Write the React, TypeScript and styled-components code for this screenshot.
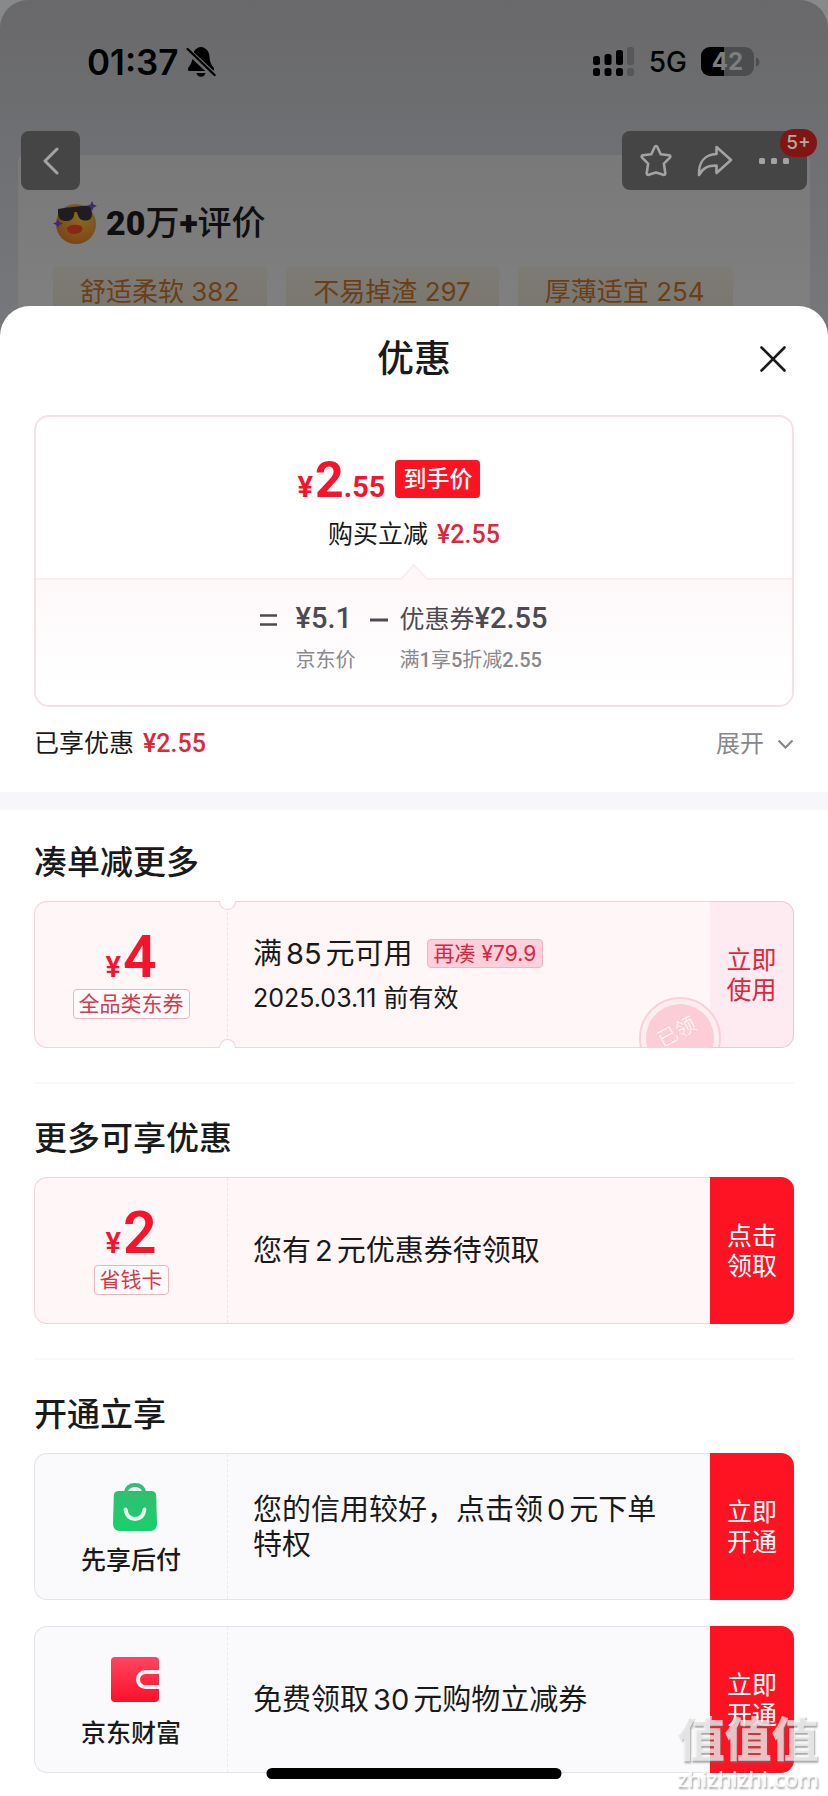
import React from "react";
import styled, { createGlobalStyle, css } from "styled-components";

const GlobalStyle = createGlobalStyle`
  * { box-sizing: border-box; }
  body {
    margin: 0;
    background: #ffffff;
    color: #1a1a1a;
    font-family: Inter, "Noto Sans CJK SC", sans-serif;
  }
  button { font: inherit; padding: 0; border: 0; background: none; cursor: pointer; }
  h1, h2, p { margin: 0; }
`;

const numeric = css`
  font-family: Roboto, "Noto Sans CJK SC", sans-serif;
`;

const Page = styled.div`
  min-height: 100vh;
  background: #88898a;
`;

/* ---------- dimmed product page ---------- */

const Backdrop = styled.div`
  height: 338px;
  overflow: hidden;
  border-radius: 28px 28px 0 0;
  background: linear-gradient(#69696b 0, #6f7073 155px, #76787c 338px);
`;

const StatusBar = styled.div`
  display: flex;
  justify-content: space-between;
  align-items: center;
  height: 131px;
  padding: 0 68px 7px 87px;
  color: #000;
`;

const StatusGroup = styled.div<{ $gap: number }>`
  display: flex;
  align-items: center;
  gap: ${(p) => p.$gap}px;
`;

const Clock = styled.span`
  font-size: 35px;
  font-weight: 600;
  line-height: 40px;
`;

const Network = styled.span`
  font-size: 28px;
  font-weight: 500;
  line-height: 32px;
`;

const NavBar = styled.div`
  position: relative;
  z-index: 1;
  display: flex;
  justify-content: space-between;
  padding: 0 21px;
`;

const NavGroup = styled.div<{ $inset?: number }>`
  position: relative;
  display: flex;
  padding: 0 ${(p) => p.$inset ?? 0}px;
  border-radius: 8px;
  background: #454546;
`;

const NavButton = styled.button`
  display: grid;
  place-items: center;
  width: 59px;
  height: 59px;
`;

const NavBadge = styled.span`
  position: absolute;
  top: -2px;
  right: -10px;
  width: 37px;
  border-radius: 14px;
  background: #7f1614;
  color: #b9a6a5;
  font-size: 19px;
  font-weight: 500;
  line-height: 28px;
  text-align: center;
`;

const ReviewCard = styled.div`
  height: 200px;
  margin: -35px 18px 0;
  padding: 46px 35px 0;
  border-radius: 6px;
  background: linear-gradient(#797979, #818181);
`;

const ReviewTitle = styled.div`
  display: flex;
  align-items: center;
  gap: 9px;
  ${numeric}
  font-size: 34px;
  font-weight: 500;
  line-height: 44px;
  color: #0f0f10;

  b { font-weight: 900; }
`;

const TagRow = styled.div`
  display: flex;
  gap: 19px;
  margin-top: 21px;
`;

const ReviewTag = styled.span`
  padding: 9px 28px 0 27px;
  border-radius: 4px;
  background: linear-gradient(#7d7b75, #79766e);
  color: #6a3f17;
  font-size: 26px;
  line-height: 34px;
  height: 52px;
  white-space: nowrap;
`;

/* ---------- sheet ---------- */

const Sheet = styled.section`
  position: relative;
  z-index: 2;
  margin-top: -32px;
  padding-bottom: 23px;
  border-radius: 30px 30px 0 0;
  background: #fff;
`;

const SheetHeader = styled.header`
  display: grid;
  grid-template-columns: 1fr auto 1fr;
  align-items: center;
  height: 109px;
  padding: 0 35px 4px;
`;

const SheetTitle = styled.h1`
  grid-column: 2;
  font-size: 37px;
  font-weight: 500;
  line-height: 44px;
`;

const CloseButton = styled.button`
  display: grid;
  place-items: center;
  justify-self: end;
  width: 40px;
  height: 40px;
`;

const PriceCard = styled.div`
  margin: 0 34px;
  border: 2px solid #f7dfe4;
  border-radius: 15px;
`;

const PriceTop = styled.div`
  display: flex;
  flex-direction: column;
  align-items: center;
  gap: 21px;
  padding: 43px 0 28px;
`;

const FinalPrice = styled.div`
  display: flex;
  align-items: flex-end;
  gap: 10px;
  padding-right: 50px;
`;

const Amount = styled.span<{ $size: number; $height: number; $weight: number }>`
  ${numeric}
  color: #f5142b;
  font-size: ${(p) => p.$size}px;
  font-weight: ${(p) => p.$weight};
  line-height: ${(p) => p.$height}px;

  small { font-size: 29px; line-height: 0; }
  small:first-child { margin-right: 2px; }
`;

const PriceTag = styled.span`
  padding: 0 8px;
  border-radius: 4px;
  background: #fd1322;
  color: #fff;
  font-size: 23px;
  font-weight: 500;
  line-height: 38px;
`;

const SavingText = styled.p`
  font-size: 25px;
  line-height: 30px;
`;

const SavingValue = styled.span`
  ${numeric}
  margin-left: 9px;
  color: #e0263a;
  font-weight: 500;
`;

const Formula = styled.div`
  position: relative;
  display: grid;
  grid-template-columns: 37px 74px 30px auto;
  justify-content: center;
  row-gap: 11px;
  padding: 24px 22px 32px 0;
  border-top: 2px solid #faeef1;
  border-radius: 0 0 13px 13px;
  background: linear-gradient(#fef8f9, #ffffff 90%);
  color: #4b4b50;
`;

const FormulaArrow = styled.svg`
  position: absolute;
  top: -17px;
  left: 50%;
  margin-left: -14px;
`;

const Operator = styled.span`
  display: flex;
  align-items: center;
  height: 32px;
`;

const Term = styled.span`
  ${numeric}
  font-size: 25px;
  line-height: 32px;
  white-space: nowrap;

  b { font-size: 29px; font-weight: 500; line-height: 0; }
  b:not(:first-child) { margin-left: 4px; }
`;

const TermNote = styled.span<{ $column: number }>`
  ${numeric}
  grid-column: ${(p) => p.$column};
  color: #88888d;
  font-size: 20px;
  line-height: 26px;
  white-space: nowrap;

  b { font-weight: 500; }
`;

const SummaryRow = styled.div`
  display: flex;
  justify-content: space-between;
  align-items: center;
  padding: 21px 34px 33px;
`;

const ExpandButton = styled.button`
  display: flex;
  align-items: center;
  gap: 13px;
  color: #88888c;
  font-size: 24px;
  line-height: 30px;
`;

const Band = styled.div`
  height: 18px;
  background: #f6f6fb;
`;

const Section = styled.section`
  margin: 0 34px;
  padding: 32px 0 34px;

  & + & {
    padding-top: 34px;
    border-top: 2px solid #f9f9fa;
  }
  &:last-of-type { padding-bottom: 0; }
`;

const SectionTitle = styled.h2`
  margin-bottom: 19px;
  font-size: 33px;
  font-weight: 500;
  line-height: 40px;
`;

const Stack = styled.div`
  display: flex;
  flex-direction: column;
  gap: 26px;
`;

type Tone = "pink" | "grey";
const tones = {
  pink: { line: "#f3d3da", dash: "#f8e1e5", fill: "#fef6f7" },
  grey: { line: "#e2e4e8", dash: "#e9ebef", fill: "#fafafc" },
};

const Ticket = styled.article`
  position: relative;
  display: flex;
  min-height: 147px;
`;

const TicketBody = styled.div<{ $tone: Tone }>`
  flex: 1;
  display: flex;
  border: 1px solid ${(p) => tones[p.$tone].line};
  border-right: 0;
  border-radius: 13px 0 0 13px;
  background: ${(p) => tones[p.$tone].fill};
`;

const TicketSide = styled.div<{ $tone: Tone }>`
  display: flex;
  flex-direction: column;
  align-items: center;
  width: 193px;
  padding-top: ${(p) => (p.$tone === "pink" ? 34 : 29)}px;
  border-right: 1px dashed ${(p) => tones[p.$tone].dash};
`;

const KindTag = styled.span`
  margin-top: 11px;
  padding: 0 5px;
  border: 1px solid #efb4be;
  border-radius: 4px;
  background: #fffafb;
  color: #d8384a;
  font-size: 21px;
  line-height: 28px;
`;

const ServiceName = styled.span`
  margin-top: 13px;
  font-size: 25px;
  font-weight: 500;
  line-height: 32px;
`;

const TicketInfo = styled.div`
  flex: 1;
  display: flex;
  flex-direction: column;
  justify-content: center;
  gap: 12px;
  padding: 0 40px 0 25px;
`;

const InfoLine = styled.p`
  display: flex;
  align-items: center;
  gap: 14px;
  font-size: 29px;
  line-height: 35px;
`;

const Digits = styled.span`
  margin: 0 4px;
`;

const InfoDate = styled.p`
  font-size: 25px;
  line-height: 30px;
`;

const GapTag = styled.span`
  padding: 0 6px;
  border: 1px solid #f6b3c2;
  border-radius: 4px;
  background: #fdd0db;
  color: #d32a3f;
  font-size: 21px;
  line-height: 27px;
`;

const ActionButton = styled.button<{ $ghost?: boolean }>`
  width: 84px;
  border-radius: 0 13px 13px 0;
  background: #fd1322;
  color: #fff;
  font-size: 25px;
  line-height: 30px;

  ${(p) =>
    p.$ghost &&
    css`
      border: 1px solid #f5c6d2;
      border-left: 0;
      background: #feeaf1;
      color: #e0263a;
    `}
`;

const Notch = styled.span<{ $edge: "top" | "bottom" }>`
  position: absolute;
  left: 185px;
  width: 17px;
  height: 9px;
  border: 1px solid #f3d3da;
  background: #fff;
  ${(p) =>
    p.$edge === "top"
      ? css`
          top: 0;
          border-top: 0;
          border-radius: 0 0 9px 9px;
        `
      : css`
          bottom: 0;
          border-bottom: 0;
          border-radius: 9px 9px 0 0;
        `}
`;

const StampWindow = styled.span`
  position: absolute;
  right: 73px;
  bottom: 1px;
  width: 82px;
  height: 50px;
  overflow: hidden;
`;

const Stamp = styled.span`
  display: block;
  width: 82px;
  height: 82px;
  padding: 5px;
  border: 2px solid #f9d0d9;
  border-radius: 50%;
  background: #feeef2;
`;

const StampFace = styled.span`
  display: block;
  height: 100%;
  border-radius: 50%;
  background: #fdcdd7;
  color: #fff;
  font-size: 20px;
  font-weight: 300;
  line-height: 54px;
  text-align: center;
  transform: rotate(-28deg);
`;

const HomeIndicator = styled.div`
  position: fixed;
  z-index: 3;
  bottom: 17px;
  left: 50%;
  width: 295px;
  height: 11px;
  border-radius: 6px;
  background: #000;
  transform: translateX(-50%);
`;

const Watermark = styled.div`
  position: fixed;
  z-index: 4;
  right: 9px;
  bottom: 5px;
  color: rgba(255, 255, 255, 0.68);
  text-align: center;
  text-shadow: 1px 2px 2px rgba(110, 110, 110, 0.6);
  font-size: 47px;
  font-weight: 900;
  line-height: 52px;

  small {
    display: block;
    font-family: "Noto Sans", "Open Sans", sans-serif;
    font-size: 22px;
    font-weight: 500;
    line-height: 26px;
    color: rgba(255, 255, 255, 0.85);
  }
`;

/* ---------- drawings ---------- */

const BellOff = () => (
  <svg width="30" height="32" viewBox="0 0 30 32">
    <path d="M15 1c-5.200 .6-8.200 4.400-8.500 9.500C6.200 17 4.500 18.600 2.600 21.200c-1.400 2-.6 3.800 1.600 3.800h21.600c2.200 0 3-1.800 1.600-3.800-1.900-2.600-3.600-4.200-3.900-10.700C23.200 5.400 20.200 1.600 15 1z" fill="#000" />
    <path d="M10.500 27h9a4.600 4.600 0 0 1-9 0z" fill="#000" />
    <path d="M.8 3.600 28.800 30" stroke="#6b6c6e" strokeWidth="6" />
    <path d="M1.600 3 28.600 29" stroke="#000" strokeWidth="2.400" strokeLinecap="round" />
  </svg>
);

const Signal = () => (
  <svg width="42" height="30" viewBox="0 0 42 30">
    <g fill="#000">
      <rect x="0" y="9" width="7" height="9" rx="2.500" />
      <rect x="11.500" y="7" width="7" height="11" rx="2.500" />
      <rect x="23" y="3" width="7" height="15" rx="2.500" />
      <rect x="0" y="21" width="7" height="8" rx="2.500" />
      <rect x="11.500" y="21" width="7" height="8" rx="2.500" />
      <rect x="23" y="21" width="7" height="8" rx="2.500" />
    </g>
    <g fill="#565759">
      <rect x="34" y="0" width="7" height="18" rx="2.500" />
      <rect x="34" y="21" width="7" height="8" rx="2.500" />
    </g>
  </svg>
);

const Battery = () => (
  <svg width="59" height="30" viewBox="0 0 59 30">
    <defs>
      <clipPath id="charge"><rect width="23" height="30" /></clipPath>
    </defs>
    <rect x="0" y="0" width="53" height="29" rx="9" fill="#4c4d4f" />
    <rect x="0" y="0" width="53" height="29" rx="9" fill="#000" clipPath="url(#charge)" />
    <path d="M55 10.500c2.600 1 3.400 2.400 3.400 4.500s-.8 3.500-3.400 4.500z" fill="#4c4d4f" />
    <text x="26.500" y="23" textAnchor="middle" fontFamily="Inter, sans-serif" fontSize="24" fontWeight="700" fill="#7d7e80">42</text>
  </svg>
);

const SunglassesFace = () => (
  <svg width="44" height="44" viewBox="0 0 44 44">
    <defs>
      <radialGradient id="face" cx="60%" cy="35%" r="70%">
        <stop offset="0" stopColor="#8a6a22" />
        <stop offset="1" stopColor="#7a4316" />
      </radialGradient>
    </defs>
    <circle cx="23" cy="23" r="20" fill="url(#face)" />
    <path d="M5 8c11-2 22-3 33-3.500l1 8.500c0 4.500-2.500 6.500-6.500 6.500-5 0-7-2-8.500-8.500h-2.500c-.5 6.500-3 9-8 9-5.500 0-8-2-8.500-7z" fill="#201d22" />
    <path d="M14 27c2-4 12-4.500 15-1 2 3-2 7-7.500 7-4.500 0-7.500-2-7.500-6z" fill="#862814" />
    <path d="M39 0l1.500 3.500L44 5l-3.500 1.500L39 10l-1.500-3.500L34 5l3.500-1.500zM5 18l1.500 3L10 22.500 6.500 24 5 27l-1.500-3L0 22.500 3.500 21z" fill="#3b2b70" />
  </svg>
);

const ShoppingBag = () => (
  <svg width="56" height="48" viewBox="0 0 56 48">
    <defs>
      <linearGradient id="bag" x1="0" y1="0" x2="0" y2="1">
        <stop offset="0" stopColor="#31bf71" />
        <stop offset="1" stopColor="#18d06c" />
      </linearGradient>
    </defs>
    <path d="M22.500 10C23.500 4.500 27 2 32 2s8.500 2.500 9.500 8" fill="none" stroke="#31bf71" strokeWidth="4" />
    <path d="M16 8h32c3.500 0 5 1.500 5.200 4.500L54 40c.2 5-2.500 8-7.500 8h-29c-5 0-7.700-3-7.500-8l.8-27.500C11 9.500 12.500 8 16 8z" fill="url(#bag)" />
    <path d="M25.500 8c1.500-2 3.500-3 6.500-3s5 1 6.500 3z" fill="#e9f8f0" />
    <path d="M22.500 26.500c1 6 4.500 9.500 9.500 9.500s8.500-3.500 9.500-9.500" fill="none" stroke="#eafaf1" strokeWidth="4" strokeLinecap="round" />
  </svg>
);

const Wallet = () => (
  <svg width="56" height="48" viewBox="0 0 56 48">
    <defs>
      <linearGradient id="wallet" x1="0" y1="0" x2="0" y2="1">
        <stop offset="0" stopColor="#ff4560" />
        <stop offset="1" stopColor="#fb1029" />
      </linearGradient>
    </defs>
    <rect x="8" y="1" width="48" height="45" rx="4" fill="url(#wallet)" />
    <path d="M56 16H42.500a7.500 7.500 0 0 0 0 15H56" fill="none" stroke="#fdf1f4" strokeWidth="4" />
  </svg>
);

/* ---------- page ---------- */

const reviewTags = ["舒适柔软 382", "不易掉渣 297", "厚薄适宜 254"];

const services = [
  {
    name: "先享后付",
    icon: <ShoppingBag />,
    text: (<>您的信用较好，点击领<Digits>0</Digits>元下单特权</>),
  },
  {
    name: "京东财富",
    icon: <Wallet />,
    text: (<>免费领取<Digits>30</Digits>元购物立减券</>),
  },
];

const Action = ({ lines, ghost }: { lines: [string, string]; ghost?: boolean }) => (
  <ActionButton type="button" $ghost={ghost}>
    {lines[0]}
    <br />
    {lines[1]}
  </ActionButton>
);

export default function App() {
  return (
    <Page>
      <GlobalStyle />
      <Backdrop>
        <StatusBar>
          <StatusGroup $gap={8}>
            <Clock>01:37</Clock>
            <BellOff />
          </StatusGroup>
          <StatusGroup $gap={14}>
            <Signal />
            <Network>5G</Network>
            <Battery />
          </StatusGroup>
        </StatusBar>
        <NavBar>
          <NavGroup>
            <NavButton type="button" aria-label="返回">
              <svg width="16" height="28" viewBox="0 0 16 28">
                <path d="M14 2 2 14l12 12" fill="none" stroke="#a3a3a4" strokeWidth="3" strokeLinecap="round" strokeLinejoin="round" />
              </svg>
            </NavButton>
          </NavGroup>
          <NavGroup $inset={4}>
            <NavButton type="button" aria-label="收藏">
              <svg width="34" height="34" viewBox="0 0 34 34">
                <path d="M17 2c.5 0 1 .3 1.200.8l3.500 7.400 8.400 1.100c1.300.2 1.700 1.500.8 2.400l-6 6 1.400 9.300c.2 1.300-.8 2.200-2 1.800L17 28.500l-7.300 2.300c-1.200.4-2.200-.5-2-1.800l1.400-9.300-6-6c-.9-.9-.5-2.200.8-2.400l8.400-1.100 3.500-7.400c.2-.5.700-.8 1.200-.8z" fill="none" stroke="#a3a3a4" strokeWidth="2.600" strokeLinejoin="round" />
              </svg>
            </NavButton>
            <NavButton type="button" aria-label="分享">
              <svg width="36" height="32" viewBox="0 0 36 32">
                <path d="M19.500 2 34 15 19.500 28v-7.500C10.500 20.500 6 23 2 30 1.500 17 8 9.500 19.500 9z" fill="none" stroke="#a3a3a4" strokeWidth="2.600" strokeLinejoin="round" />
              </svg>
            </NavButton>
            <NavButton type="button" aria-label="更多">
              <svg width="30" height="6" viewBox="0 0 30 6">
                <g fill="#a3a3a4">
                  <rect width="6" height="6" rx="1.500" />
                  <rect x="12" width="6" height="6" rx="1.500" />
                  <rect x="24" width="6" height="6" rx="1.500" />
                </g>
              </svg>
            </NavButton>
            <NavBadge>5+</NavBadge>
          </NavGroup>
        </NavBar>
        <ReviewCard>
          <ReviewTitle>
            <SunglassesFace />
            <span><b>20</b>万<b>+</b>评价</span>
          </ReviewTitle>
          <TagRow>
            {reviewTags.map((t) => (
              <ReviewTag key={t}>{t}</ReviewTag>
            ))}
          </TagRow>
        </ReviewCard>
      </Backdrop>

      <Sheet>
        <SheetHeader>
          <SheetTitle>优惠</SheetTitle>
          <CloseButton type="button" aria-label="关闭">
            <svg width="26" height="26" viewBox="0 0 26 26">
              <path d="M1.500 1.500l23 23M24.500 1.500l-23 23" stroke="#1a1a1a" strokeWidth="2.600" strokeLinecap="round" />
            </svg>
          </CloseButton>
        </SheetHeader>

        <PriceCard>
          <PriceTop>
            <FinalPrice>
              <Amount $size={50} $height={36} $weight={700}>
                <small>¥</small>2<small>.55</small>
              </Amount>
              <PriceTag>到手价</PriceTag>
            </FinalPrice>
            <SavingText>
              购买立减<SavingValue>¥2.55</SavingValue>
            </SavingText>
          </PriceTop>
          <Formula>
            <FormulaArrow width="28" height="18" viewBox="0 0 28 18">
              <path d="M0 18 14 2l14 16z" fill="#fef8f9" />
              <path d="M1 16 14 2l13 14" fill="none" stroke="#faeef1" strokeWidth="2" />
            </FormulaArrow>
            <Operator>
              <svg width="19" height="14" viewBox="0 0 19 14">
                <path d="M1 2.500h17M1 11.500h17" stroke="#4b4b50" strokeWidth="2.600" />
              </svg>
            </Operator>
            <Term><b>¥5.1</b></Term>
            <Operator>
              <svg width="18" height="4" viewBox="0 0 18 4">
                <path d="M0 2h18" stroke="#4b4b50" strokeWidth="3" />
              </svg>
            </Operator>
            <Term>优惠券<b>¥2.55</b></Term>
            <TermNote $column={2}>京东价</TermNote>
            <TermNote $column={4}>满<b>1</b>享<b>5</b>折减<b>2.55</b></TermNote>
          </Formula>
        </PriceCard>

        <SummaryRow>
          <SavingText>
            已享优惠<SavingValue>¥2.55</SavingValue>
          </SavingText>
          <ExpandButton type="button">
            展开
            <svg width="17" height="10" viewBox="0 0 17 10">
              <path d="M1.500 1.500l7 7 7-7" fill="none" stroke="#88888c" strokeWidth="2.200" />
            </svg>
          </ExpandButton>
        </SummaryRow>

        <Band />

        <Section>
          <SectionTitle>凑单减更多</SectionTitle>
          <Ticket>
            <TicketBody $tone="pink">
              <TicketSide $tone="pink">
                <Amount $size={59} $height={42} $weight={600}><small>¥</small>4</Amount>
                <KindTag>全品类东券</KindTag>
              </TicketSide>
              <TicketInfo>
                <InfoLine>
                  <span>满<Digits>85</Digits>元可用</span>
                  <GapTag>再凑 ¥79.9</GapTag>
                </InfoLine>
                <InfoDate>2025.03.11 前有效</InfoDate>
              </TicketInfo>
            </TicketBody>
            <Action lines={["立即", "使用"]} ghost />
            <Notch $edge="top" />
            <Notch $edge="bottom" />
            <StampWindow>
              <Stamp><StampFace>已领</StampFace></Stamp>
            </StampWindow>
          </Ticket>
        </Section>

        <Section>
          <SectionTitle>更多可享优惠</SectionTitle>
          <Ticket>
            <TicketBody $tone="pink">
              <TicketSide $tone="pink">
                <Amount $size={59} $height={42} $weight={600}><small>¥</small>2</Amount>
                <KindTag>省钱卡</KindTag>
              </TicketSide>
              <TicketInfo>
                <InfoLine><span>您有<Digits>2</Digits>元优惠券待领取</span></InfoLine>
              </TicketInfo>
            </TicketBody>
            <Action lines={["点击", "领取"]} />
          </Ticket>
        </Section>

        <Section>
          <SectionTitle>开通立享</SectionTitle>
          <Stack>
            {services.map((s) => (
              <Ticket key={s.name}>
                <TicketBody $tone="grey">
                  <TicketSide $tone="grey">
                    {s.icon}
                    <ServiceName>{s.name}</ServiceName>
                  </TicketSide>
                  <TicketInfo>
                    <InfoLine><span>{s.text}</span></InfoLine>
                  </TicketInfo>
                </TicketBody>
                <Action lines={["立即", "开通"]} />
              </Ticket>
            ))}
          </Stack>
        </Section>
      </Sheet>

      <HomeIndicator />
      <Watermark>
        值值值
        <small>zhizhizhi.com</small>
      </Watermark>
    </Page>
  );
}
